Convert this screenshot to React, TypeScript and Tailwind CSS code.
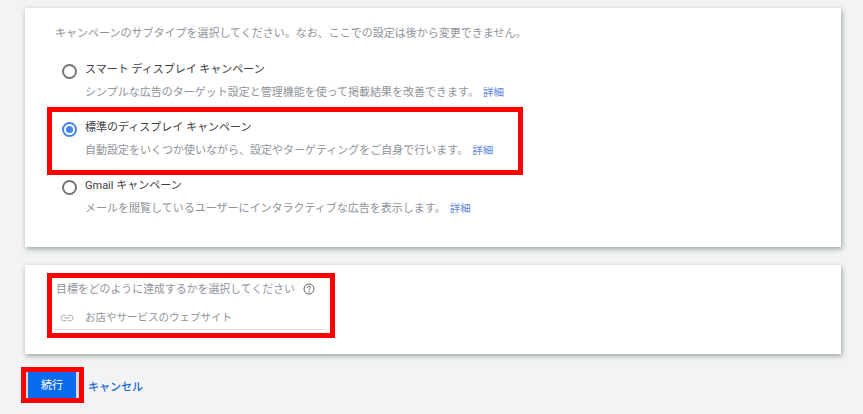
const FONT = "font-['Roboto','Noto_Sans_CJK_JP',sans-serif]";

function Radio({ checked }: { checked?: boolean }) {
  return (
    <span
      className={`flex h-[15px] w-[15px] shrink-0 items-center justify-center rounded-full border-2 ${
        checked ? "border-[#4285f4]" : "border-[#757575]"
      }`}
    >
      {checked && <span className="h-[7px] w-[7px] rounded-full bg-[#4285f4]" />}
    </span>
  );
}

function Option({ title, desc, checked }: { title: string; desc: string; checked?: boolean }) {
  return (
    <div className="flex flex-col">
      <div className="flex h-[20px] items-center gap-[8px]">
        <Radio checked={checked} />
        <span className="-mt-[2px] text-[11px] text-[#3c4043]">{title}</span>
      </div>
      <div className="mt-[2px] flex h-[20px] items-center pl-[23px] text-[11px] text-[#8f9499]">
        <span>{desc}</span>
        <a className="ml-[4px] text-[10.5px] text-[#5b84e0]">詳細</a>
      </div>
    </div>
  );
}

export default function App() {
  return (
    <div className={`${FONT} h-[414px] w-[863px] overflow-hidden bg-[#f1f3f4] pt-[8px] pl-[25px]`}>
      <section className="h-[239px] w-[816px] bg-white pt-[17px] pl-[31px] shadow-[1px_2px_5px_rgba(60,64,67,0.45)]">
        <p className="-ml-[1px] h-[18px] text-[11px] leading-[18px] text-[#8f9499]">
          キャンペーンのサブタイプを選択してください。なお、ここでの設定は後から変更できません。
        </p>
        <div className="mt-[18px] flex flex-col">
          <div className="pl-[6px]">
            <Option
              title="スマート ディスプレイ キャンペーン"
              desc="シンプルな広告のターゲット設定と管理機能を使って掲載結果を改善できます。"
            />
          </div>
          <div className="-ml-[9px] mt-[4px] w-[476px] border-[5px] border-[#f00] pt-[7px] pb-[9px] pl-[10px]">
            <Option
              checked
              title="標準のディスプレイ キャンペーン"
              desc="自動設定をいくつか使いながら、設定やターゲティングをご自身で行います。"
            />
          </div>
          <div className="pt-[2px] pl-[6px]">
            <Option
              title="Gmail キャンペーン"
              desc="メールを閲覧しているユーザーにインタラクティブな広告を表示します。"
            />
          </div>
        </div>
      </section>

      <section className="mt-[18px] h-[89px] w-[816px] bg-white pt-[8px] pl-[22px] shadow-[1px_2px_5px_rgba(60,64,67,0.45)]">
        <div className="h-[65px] w-[288px] border-[5px] border-[#f00] pr-[5px]">
          <div className="flex h-[24px] items-center text-[10.9px] text-[#8f9499]">
            <span className="ml-[4px]">目標をどのように達成するかを選択してください</span>
            <svg viewBox="0 0 24 24" className="ml-[8px] -mt-[3px] h-[12px] w-[12px]" fill="none" stroke="#5f6368" strokeWidth="2">
              <circle cx="12" cy="12" r="10" />
              <path d="M9 9.5a3 3 0 0 1 6 0c0 2-3 2.5-3 4.5" />
              <circle cx="12" cy="17.5" r="0.6" fill="#5f6368" />
            </svg>
          </div>
          <div className="ml-[3px] mt-[3px] flex h-[25px] items-center border-b border-[#dadce0] pt-[2px]">
            <svg viewBox="0 0 24 24" className="ml-[4px] h-[16px] w-[16px]" fill="#bdc1c6">
              <path d="M3.9 12c0-1.71 1.39-3.1 3.1-3.1h4V7H7c-2.76 0-5 2.24-5 5s2.24 5 5 5h4v-1.9H7c-1.71 0-3.1-1.39-3.1-3.1zM8 13h8v-2H8v2zm9-6h-4v1.9h4c1.71 0 3.1 1.39 3.1 3.1s-1.39 3.1-3.1 3.1h-4V17h4c2.76 0 5-2.24 5-5s-2.24-5-5-5z" />
            </svg>
            <span className="ml-[10px] text-[10.5px] text-[#8f9499]">お店やサービスのウェブサイト</span>
          </div>
        </div>
      </section>

      <div className="-ml-[4px] mt-[13px] flex items-center">
        <div className="border-[5px] border-[#f00]">
          <button className="h-[26px] w-[53px] border-l-2 border-r-[3px] border-[#dadce0] bg-[#0b6bee] pt-[3px] text-[11px] text-white">続行</button>
        </div>
        <a className="ml-[4px] pt-[6px] text-[11px] font-medium text-[#1a66d2]">キャンセル</a>
      </div>
    </div>
  );
}
